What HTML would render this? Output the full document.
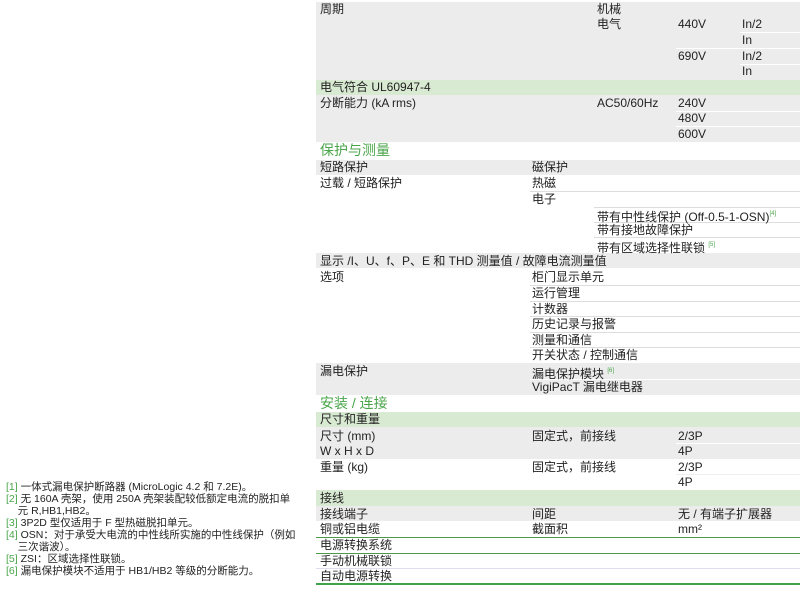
<!DOCTYPE html>
<html><head><meta charset="utf-8"><style>
body{margin:0;width:800px;height:592px;background:#fff;position:relative;overflow:hidden;font-family:"Liberation Sans","Noto Sans CJK SC",sans-serif;font-size:12px;color:#222}
.b{position:absolute;left:316px;right:0}
.g{background:#ececec}.gr{background:#d9ead3}
.t{position:absolute;white-space:nowrap;line-height:15px}
.h{color:#4aa54a;font-size:14px}
.l{position:absolute;height:1px;background:#fff}
.gl{position:absolute;left:316px;right:0;height:1px;background:#4a9a4a}
sup{font-size:6px;color:#4aa54a;vertical-align:6px}
.fn{position:absolute;left:6px;font-size:10.5px;line-height:11.5px;width:300px;white-space:nowrap}
.fn b{font-weight:normal;color:#4aa54a}
</style></head><body>
<div class="b g" style="top:2px;height:78px"></div>
<div class="b gr" style="top:80px;height:15px"></div>
<div class="b g" style="top:95px;height:47px"></div>
<div class="b g" style="top:160px;height:15px"></div>
<div class="b g" style="top:253px;height:15px"></div>
<div class="b g" style="top:363px;height:32px"></div>
<div class="b gr" style="top:412px;height:15px"></div>
<div class="b g" style="top:427px;height:32px"></div>
<div class="b gr" style="top:490px;height:16px"></div>
<div class="b g" style="top:506px;height:15px"></div>
<div class="l" style="left:740px;right:0;top:32px"></div>
<div class="l" style="left:676px;right:0;top:48px"></div>
<div class="l" style="left:740px;right:0;top:64px"></div>
<div class="l" style="left:676px;right:0;top:111px"></div>
<div class="l" style="left:676px;right:0;top:126px"></div>
<div class="l" style="left:676px;right:0;top:443px"></div>
<div class="l" style="left:530px;right:0;top:379px"></div>
<div style="position:absolute;left:530px;right:0;top:191px;height:1px;background:#ddd"></div>
<div style="position:absolute;left:594px;right:0;top:207px;height:1px;background:#ddd"></div>
<div style="position:absolute;left:594px;right:0;top:222px;height:1px;background:#ddd"></div>
<div style="position:absolute;left:594px;right:0;top:237px;height:1px;background:#ddd"></div>
<div style="position:absolute;left:530px;right:0;top:285px;height:1px;background:#ddd"></div>
<div style="position:absolute;left:530px;right:0;top:301px;height:1px;background:#ddd"></div>
<div style="position:absolute;left:530px;right:0;top:316px;height:1px;background:#ddd"></div>
<div style="position:absolute;left:530px;right:0;top:332px;height:1px;background:#ddd"></div>
<div style="position:absolute;left:530px;right:0;top:347px;height:1px;background:#ddd"></div>
<div style="position:absolute;left:676px;right:0;top:474px;height:1px;background:#eee"></div>
<div class="gl" style="top:537px"></div>
<div class="gl" style="top:553px"></div>
<div class="gl" style="top:568px;background:#dde"></div>
<div class="gl" style="top:583px;height:2px;background:#3fa34a"></div>

<div class="t" style="left:320px;top:2px">周期</div>
<div class="t" style="left:597px;top:2px">机械</div>
<div class="t" style="left:597px;top:17px">电气</div>
<div class="t" style="left:678px;top:17px">440V</div>
<div class="t" style="left:742px;top:17px">In/2</div>
<div class="t" style="left:742px;top:33px">In</div>
<div class="t" style="left:678px;top:49px">690V</div>
<div class="t" style="left:742px;top:49px">In/2</div>
<div class="t" style="left:742px;top:64px">In</div>
<div class="t" style="left:320px;top:80px">电气符合 UL60947-4</div>
<div class="t" style="left:320px;top:96px">分断能力 (kA rms)</div>
<div class="t" style="left:597px;top:96px">AC50/60Hz</div>
<div class="t" style="left:678px;top:96px">240V</div>
<div class="t" style="left:678px;top:111px">480V</div>
<div class="t" style="left:678px;top:127px">600V</div>
<div class="t h" style="left:320px;top:143px">保护与测量</div>
<div class="t" style="left:320px;top:160px">短路保护</div>
<div class="t" style="left:532px;top:160px">磁保护</div>
<div class="t" style="left:320px;top:176px">过载 / 短路保护</div>
<div class="t" style="left:532px;top:176px">热磁</div>
<div class="t" style="left:532px;top:192px">电子</div>
<div class="t" style="left:597px;top:207px">带有中性线保护 (Off-0.5-1-OSN)<sup>[4]</sup></div>
<div class="t" style="left:597px;top:223px">带有接地故障保护</div>
<div class="t" style="left:597px;top:238px">带有区域选择性联锁 <sup>[5]</sup></div>
<div class="t" style="left:320px;top:254px">显示 /I、U、f、P、E 和 THD 测量值 / 故障电流测量值</div>
<div class="t" style="left:320px;top:270px">选项</div>
<div class="t" style="left:532px;top:270px">柜门显示单元</div>
<div class="t" style="left:532px;top:286px">运行管理</div>
<div class="t" style="left:532px;top:302px">计数器</div>
<div class="t" style="left:532px;top:317px">历史记录与报警</div>
<div class="t" style="left:532px;top:333px">测量和通信</div>
<div class="t" style="left:532px;top:348px">开关状态 / 控制通信</div>
<div class="t" style="left:320px;top:364px">漏电保护</div>
<div class="t" style="left:532px;top:364px">漏电保护模块 <sup>[6]</sup></div>
<div class="t" style="left:532px;top:380px">VigiPacT 漏电继电器</div>
<div class="t h" style="left:320px;top:396px">安装 / 连接</div>
<div class="t" style="left:320px;top:412px">尺寸和重量</div>
<div class="t" style="left:320px;top:429px">尺寸 (mm)</div>
<div class="t" style="left:532px;top:429px">固定式，前接线</div>
<div class="t" style="left:678px;top:429px">2/3P</div>
<div class="t" style="left:320px;top:444px">W x H x D</div>
<div class="t" style="left:678px;top:444px">4P</div>
<div class="t" style="left:320px;top:460px">重量 (kg)</div>
<div class="t" style="left:532px;top:460px">固定式，前接线</div>
<div class="t" style="left:678px;top:460px">2/3P</div>
<div class="t" style="left:678px;top:475px">4P</div>
<div class="t" style="left:320px;top:491px">接线</div>
<div class="t" style="left:320px;top:507px">接线端子</div>
<div class="t" style="left:532px;top:507px">间距</div>
<div class="t" style="left:678px;top:507px">无 / 有端子扩展器</div>
<div class="t" style="left:320px;top:522px">铜或铝电缆</div>
<div class="t" style="left:532px;top:522px">截面积</div>
<div class="t" style="left:678px;top:522px">mm²</div>
<div class="t" style="left:320px;top:538px">电源转换系统</div>
<div class="t" style="left:320px;top:554px">手动机械联锁</div>
<div class="t" style="left:320px;top:569px">自动电源转换</div>

<div class="fn" style="top:482px"><b>[1]</b> 一体式漏电保护断路器 (MicroLogic 4.2 和 7.2E)。</div>
<div class="fn" style="top:494px"><b>[2]</b> 无 160A 壳架，使用 250A 壳架装配较低额定电流的脱扣单<br>&nbsp;&nbsp;&nbsp;&nbsp;元 R,HB1,HB2。</div>
<div class="fn" style="top:518px"><b>[3]</b> 3P2D 型仅适用于 F 型热磁脱扣单元。</div>
<div class="fn" style="top:530px"><b>[4]</b> OSN：对于承受大电流的中性线所实施的中性线保护（例如<br>&nbsp;&nbsp;&nbsp;&nbsp;三次谐波）。</div>
<div class="fn" style="top:554px"><b>[5]</b> ZSI：区域选择性联锁。</div>
<div class="fn" style="top:566px"><b>[6]</b> 漏电保护模块不适用于 HB1/HB2 等级的分断能力。</div>
</body></html>
